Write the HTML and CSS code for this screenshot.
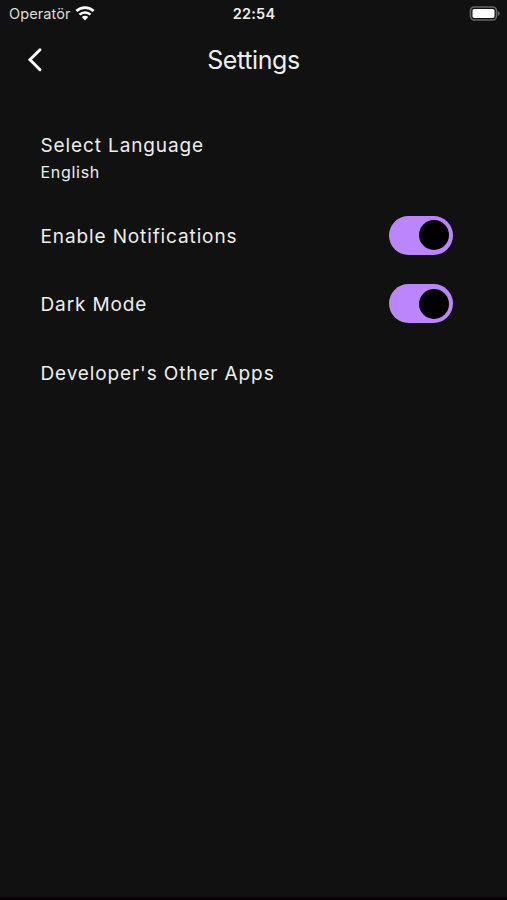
FILE: index.html
```html
<!DOCTYPE html>
<html lang="en">
<head>
    <meta charset="UTF-8">
    <meta name="viewport" content="width=device-width, initial-scale=1.0">
    <title>Settings</title>
    <link rel="stylesheet" href="styles.css">
</head>
<body>
    <!-- Status Bar -->
    <div class="status-bar">
        <div class="carrier">
            <span class="carrier-name">Operatör</span>
            <svg class="wifi" width="20" height="15" viewBox="0 0 20 15">
                <path d="M1.4 5a12.5 12.5 0 0 1 17.2 0" fill="none" stroke="#fff" stroke-width="2.8"/>
                <path d="M4.5 8.7a8 8 0 0 1 11 0" fill="none" stroke="#fff" stroke-width="2.5"/>
                <path d="M10 14.4l-3.2-3.3a4.8 4.8 0 0 1 6.4 0z" fill="#fff"/>
            </svg>
        </div>
        <span class="time">22:54</span>
        <svg class="battery" width="32" height="16" viewBox="0 0 32 16">
            <rect x="1.5" y="1" width="26" height="13" rx="4" fill="none" stroke="#666" stroke-width="1.6"/>
            <rect x="3.5" y="3" width="22" height="9" rx="1.8" fill="#fff"/>
            <path d="M28.8 5a2.6 2.6 0 0 1 0 5z" fill="#666"/>
        </svg>
    </div>

    <!-- Header -->
    <header class="header">
        <svg class="back" width="16" height="26" viewBox="0 0 16 26">
            <path d="M13 2.8L3 12.8l10 10" fill="none" stroke="#fff" stroke-width="3" stroke-linecap="round"/>
        </svg>
        <h1>Settings</h1>
    </header>

    <!-- Settings List -->
    <main class="settings">
        <div class="setting language">
            <div class="setting-text">
                <h2>Select Language</h2>
                <p>English</p>
            </div>
        </div>
        <div class="setting">
            <h2>Enable Notifications</h2>
            <div class="switch"><div class="thumb"></div></div>
        </div>
        <div class="setting">
            <h2>Dark Mode</h2>
            <div class="switch"><div class="thumb"></div></div>
        </div>
        <div class="setting">
            <h2>Developer's Other Apps</h2>
        </div>
    </main>
</body>
</html>
```

FILE: styles.css
```css
body {
    font-family: Inter, 'Liberation Sans', sans-serif;
    margin: 0;
    height: 900px;
    box-sizing: border-box;
    border-bottom: 3px solid #080307;
    background: #111;
    color: #eee;
    overflow: hidden;
}

h1, h2, p {
    margin: 0;
    font-weight: 400;
    white-space: nowrap;
}

/* Status Bar */
.status-bar {
    display: grid;
    grid-template-columns: 1fr auto 1fr;
    align-items: center;
    height: 27px;
    padding: 0 6px 0 9px;
}

.carrier {
    display: flex;
    align-items: center;
    gap: 4px;
}

.carrier-name {
    font-size: 14.5px;
    color: #ddd;
    letter-spacing: 0.1px;
}

.time {
    font-size: 14.5px;
    font-weight: 600;
    letter-spacing: 0.2px;
    padding-right: 2px;
}

.battery {
    justify-self: end;
}

/* Header */
.header {
    display: grid;
    grid-template-columns: 1fr auto 1fr;
    align-items: center;
    height: 66px;
    padding: 0 27px;
}

.header h1 {
    font-size: 25px;
    letter-spacing: -0.4px;
}

/* Settings List */
.settings {
    padding: 39px 54px 0 40.5px;
}

.setting {
    display: flex;
    align-items: center;
    justify-content: space-between;
    height: 68.5px;
}

.setting h2 {
    font-size: 19px;
    line-height: 27px;
    letter-spacing: 0.88px;
}

.setting > h2 {
    padding-top: 2px;
}

.language {
    height: 69px;
    align-items: flex-start;
}

.setting p {
    font-size: 16px;
    line-height: 26px;
    letter-spacing: 0.7px;
}

.switch {
    display: flex;
    justify-content: flex-end;
    align-items: center;
    box-sizing: border-box;
    width: 64px;
    height: 39px;
    padding-right: 4.5px;
    border-radius: 20px;
    background: #bb86fc;
}

.thumb {
    width: 30px;
    height: 30px;
    border-radius: 50%;
    background: #000;
}
```
